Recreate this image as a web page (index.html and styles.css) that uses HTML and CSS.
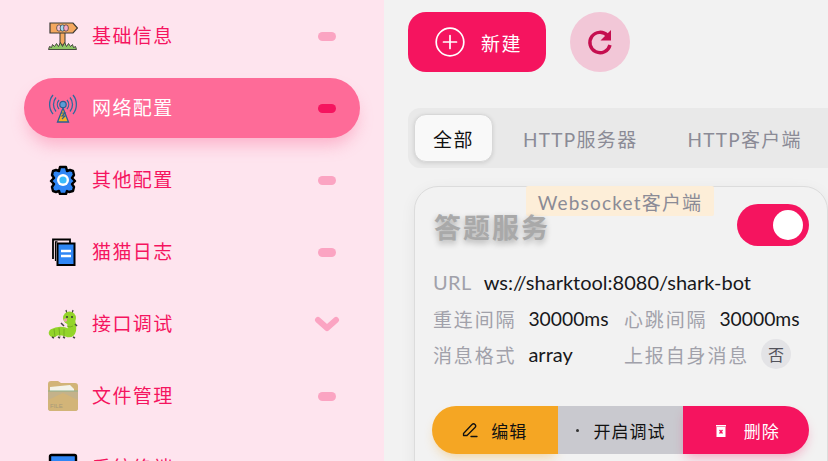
FILE: index.html
```html
<!DOCTYPE html>
<html lang="zh">
<head>
<meta charset="utf-8">
<title>网络配置</title>
<link rel="stylesheet" href="styles.css">
</head>
<body>
<div class="app">
  <aside class="sidebar">
    <div class="nav-item">
      <svg class="nav-icon" viewBox="0 0 30 30"><path d="M12 11h5v13h-5z" fill="#f4a85f" stroke="#3b3a36" stroke-width="1"/><path d="M2 2h23l4.500 5-4.500 5H2z" fill="#f4a85f" stroke="#3b3a36" stroke-width="1.200"/><ellipse cx="11" cy="7" rx="2.400" ry="3.200" fill="#f7c6d0" stroke="#333" stroke-width=".7"/><ellipse cx="14.500" cy="7" rx="2.400" ry="3.200" fill="#a5d8ef" stroke="#333" stroke-width=".7"/><ellipse cx="18" cy="7" rx="2.400" ry="3.200" fill="#f4a9c6" stroke="#333" stroke-width=".7"/><path d="M.5 28.500l1-3 2 1 1-3 2 2 2-3 2 3 2-4 2 4 2-4 2 4 2-3 2 3 2-2 1 3 2-1 1 3z" fill="#8fc766" stroke="#3b3a36" stroke-width=".9"/></svg>
      <span class="nav-label">基础信息</span><span class="nav-pill"></span>
    </div>
    <div class="nav-item is-active">
      <svg class="nav-icon" viewBox="0 0 30 30" fill="none"><path d="M8 4.500a11 11 0 0 0 0 14M22 4.500a11 11 0 0 1 0 14" stroke="#2f6a9e" stroke-width="1.300"/><path d="M5 2a15 15 0 0 0 0 19M25 2a15 15 0 0 1 0 19" stroke="#2f6a9e" stroke-width="1.300"/><path d="M11 7a7 7 0 0 0 0 9M19 7a7 7 0 0 1 0 9" stroke="#2f6a9e" stroke-width="1.300"/><path d="M15 15l5.500 14H9.500z" fill="#f5b120" stroke="#2b5f92" stroke-width="1.300"/><path d="M13 20h4l-3 3h3l-3 3" stroke="#2b5f92" stroke-width="1.100"/><circle cx="15" cy="11.500" r="3.200" fill="#5b9bd5" stroke="#2b5f92" stroke-width="1.200"/></svg>
      <span class="nav-label">网络配置</span><span class="nav-pill"></span>
    </div>
    <div class="nav-item">
      <svg class="nav-icon" viewBox="0 0 30 30"><path d="M12 2h6l1 4 3-1 3 1 1 4-2 3 3 3-3 3 2 3-1 4-4 1-2-1-1 3h-6l-1-3-3 1-3-1-1-4 2-3-3-3 3-3-2-3 1-4 3-1 3 1z" fill="#2f86f5" stroke="#000" stroke-width="2.400" stroke-linejoin="round"/><circle cx="15" cy="15" r="6" fill="#fff"/><circle cx="15" cy="15" r="3.600" fill="#3cbcfa"/></svg>
      <span class="nav-label">其他配置</span><span class="nav-pill"></span>
    </div>
    <div class="nav-item">
      <svg class="nav-icon" viewBox="0 0 30 30"><path d="M5 22V2.500h17v4" fill="none" stroke="#000" stroke-width="1.800"/><path d="M7.500 24V4.800h2" fill="none" stroke="#000" stroke-width="1.200"/><rect x="9.500" y="6.500" width="17" height="21.500" fill="#2f86f5" stroke="#000" stroke-width="2"/><path d="M13 14h10M13 19h10" stroke="#fff" stroke-width="2.400"/></svg>
      <span class="nav-label">猫猫日志</span><span class="nav-pill"></span>
    </div>
    <div class="nav-item">
      <svg class="nav-icon" viewBox="0 0 30 30"><path d="M18 1l1 4M25 1l-1 4" stroke="#444" stroke-width="1.200"/><path d="M5 24Q12 20 20 24Q26 25 23 12" fill="none" stroke="#93d42a" stroke-width="8.500" stroke-linecap="round"/><circle cx="21.500" cy="9" r="6.500" fill="#93d42a"/><circle cx="19" cy="8" r="1" fill="#333"/><circle cx="24" cy="8" r="1" fill="#333"/><circle cx="17.500" cy="11" r="1.700" fill="#e8a3a0"/><path d="M6 20l1 8M11 19l1 9M16 20l0 8M19 17q3 2 6 0" fill="none" stroke="#6fa51f" stroke-width=".8"/><path d="M13 14l3 3M27 15l2 2M4 28l2 1M10 28l2 1M15 28l2 1M25 28l2 1" stroke="#444" stroke-width="1.500"/></svg>
      <span class="nav-label">接口调试</span>
      <svg class="nav-chevron" viewBox="0 0 26 16"><path d="M4 4l9 8 9-8" fill="none" stroke="#fba4c2" stroke-width="6" stroke-linecap="round" stroke-linejoin="round"/></svg>
    </div>
    <div class="nav-item">
      <svg class="nav-icon" viewBox="0 0 30 30"><path d="M0 3a3 3 0 0 1 3-3h7l3 2h14a3 3 0 0 1 3 3v9H0z" fill="#d2b478"/><path d="M2 6l20-2 4 4v7H2z" fill="#f3f3ea"/><path d="M0 10h30v17a3 3 0 0 1-3 3H3a3 3 0 0 1-3-3z" fill="#c4b28a"/><path d="M0 19l15-7 15 7v8a3 3 0 0 1-3 3H3a3 3 0 0 1-3-3z" fill="#d2b478"/><path d="M0 10h30" stroke="#8fb08c"/><text x="2" y="27" class="folder-text">FILE</text></svg>
      <span class="nav-label">文件管理</span><span class="nav-pill"></span>
    </div>
    <div class="nav-item">
      <svg class="nav-icon" viewBox="0 0 30 30"><rect x="2" y="2" width="26" height="20" rx="1.500" fill="#2f86f5" stroke="#000" stroke-width="2.400"/></svg>
      <span class="nav-label">系统终端</span><span class="nav-pill"></span>
    </div>
  </aside>

  <main class="main">
    <div class="toolbar">
      <button class="btn-new">
        <svg class="btn-new-icon" viewBox="0 0 30 30" fill="none" stroke="#fff" stroke-width="1.700"><circle cx="15" cy="15" r="13.800"/><path d="M15 8.500v13M8.500 15h13" stroke-linecap="round"/></svg>
        <span>新建</span>
      </button>
      <button class="btn-refresh">
        <svg viewBox="0 0 28 28" class="btn-refresh-icon"><path d="M21.500 7.500A10.200 10.200 0 1 0 24 17" fill="none" stroke="#c50f4f" stroke-width="3.400"/><path d="M25 2v10.500H14.500z" fill="#c50f4f"/></svg>
      </button>
    </div>

    <div class="tabs">
      <div class="tab is-current">全部</div>
      <div class="tab">HTTP服务器</div>
      <div class="tab">HTTP客户端</div>
    </div>

    <section class="card">
      <span class="floating-tag">Websocket客户端</span>
      <div class="card-head">
        <h2 class="card-title">答题服务</h2>
        <div class="toggle"><span class="knob"></span></div>
      </div>
      <div class="meta">
        <div class="row"><span class="key key-url">URL</span><span class="val">ws://sharktool:8080/shark-bot</span></div>
        <div class="row pairs">
          <div class="pair"><span class="key">重连间隔</span><span class="val val-num">30000ms</span></div>
          <div class="pair"><span class="key">心跳间隔</span><span class="val val-num">30000ms</span></div>
        </div>
        <div class="row pairs">
          <div class="pair"><span class="key">消息格式</span><span class="val">array</span></div>
          <div class="pair"><span class="key">上报自身消息</span><span class="chip">否</span></div>
        </div>
      </div>
      <div class="actions">
        <button class="act act-edit">
          <svg class="act-icon" viewBox="0 0 16 16" fill="none" stroke="#111" stroke-width="1.300"><path d="M1.500 11.500L10 2.500a1.800 1.800 0 0 1 3 3L5 13.500H1.500z" stroke-linejoin="round"/><path d="M9 14.500h6" stroke-linecap="round"/></svg>
          <span>编辑</span>
        </button>
        <button class="act act-debug"><span class="dot"></span><span>开启调试</span></button>
        <button class="act act-del">
          <svg class="act-icon" viewBox="0 0 16 16"><path d="M3 3h10v1.500H3zM3.500 5h9v10h-9z" fill="#fff"/><path d="M6.500 8l3 3.500M9.500 8l-3 3.500" stroke="#f5145f" stroke-width="1.300"/></svg>
          <span>删除</span>
        </button>
      </div>
    </section>
  </main>
</div>
</body>
</html>
```

FILE: styles.css
```css
* { box-sizing: border-box; }
html, body { margin: 0; height: 100%; overflow: hidden; }
body {
  background: #f2f2f2;
  font-family: "Lato", "Noto Sans CJK SC", sans-serif;
  color: #18181b;
}
button { font: inherit; border: 0; padding: 0; }
.app { display: flex; height: 461px; overflow: hidden; }

.sidebar {
  width: 384px;
  flex: none;
  height: 461px;
  overflow: hidden;
  background: #fee4ee;
  padding: 6px 24px 0;
  display: flex;
  flex-direction: column;
  gap: 12px;
}
.nav-item {
  flex: none;
  height: 60px;
  border-radius: 30px;
  display: flex;
  align-items: center;
  padding: 0 24px;
  color: #f5145f;
}
.nav-item.is-active {
  background: #fe6b98;
  color: #fff;
  box-shadow: 0 10px 16px -3px rgba(250, 105, 150, .4);
}
.nav-icon { width: 30px; height: 30px; flex: none; }
.nav-label { margin-left: 14px; font-size: 19px; letter-spacing: 1.400px; line-height: 24px; }
.nav-pill {
  margin-left: auto;
  width: 18px;
  height: 9px;
  border-radius: 5px;
  background: #fba4c2;
}
.is-active .nav-pill { background: #f5145f; }
.nav-chevron { margin-left: auto; margin-right: -4px; width: 26px; height: 16px; }
.folder-text { font: 6px "Liberation Sans", sans-serif; fill: #a89a78; }

.main { flex: 1; min-width: 0; padding: 12px 0 0 24px; overflow: hidden; }
.toolbar { display: flex; gap: 24px; }
.btn-new {
  width: 138px;
  height: 60px;
  border-radius: 18px;
  background: #f5145f;
  color: #fff;
  display: flex;
  align-items: center;
  justify-content: center;
  gap: 16px;
  padding-left: 3px;
  font-size: 19px;
  letter-spacing: 1.500px;
}
.btn-new-icon { width: 30px; height: 30px; }
.btn-refresh {
  width: 60px;
  height: 60px;
  border-radius: 50%;
  background: #f2c7d7;
  display: flex;
  align-items: center;
  justify-content: center;
}
.btn-refresh-icon { width: 28px; height: 28px; }

.tabs {
  margin-top: 36px;
  height: 60px;
  width: 440px;
  background: #e9e9e9;
  border-radius: 12px 0 0 12px;
  padding: 6px;
  display: flex;
  white-space: nowrap;
}
.tab {
  height: 48px;
  padding: 0 25px;
  display: flex;
  align-items: center;
  color: #8b8b96;
  font-size: 19px;
  letter-spacing: 1.300px;
}
.tab.is-current {
  width: 79px;
  padding: 0;
  justify-content: center;
  background: #f9f9f9;
  color: #111;
  border: 1px solid #d8d8d8;
  border-radius: 12px;
  box-shadow: 0 1px 4px rgba(0, 0, 0, .12);
  letter-spacing: 1.500px;
  margin-right: 5px;
}

.card {
  position: relative;
  margin: 18px 0 0 6px;
  width: 414px;
  height: 320px;
  border: 1px solid #dcdcdc;
  border-radius: 24px;
  background: #f2f2f2;
  box-shadow: 0 4px 16px rgba(0, 0, 0, .06);
  padding: 17px 17px 0;
}
.floating-tag {
  position: absolute;
  left: 111px;
  top: -1px;
  height: 30px;
  width: 188px;
  background: #fdeed8;
  color: #8b8b96;
  font-size: 19px;
  letter-spacing: 1.200px;
  display: flex;
  align-items: center;
  justify-content: center;
  border-radius: 2px;
}
.card-head { display: flex; align-items: center; justify-content: space-between; height: 42px; width: 377px; }
.card-title {
  margin: 0 0 0 2px;
  font-size: 27px;
  font-weight: 700;
  letter-spacing: 2px;
  color: #a9a9a9;
  text-shadow: 0 3px 6px rgba(0, 0, 0, .3);
  line-height: 36px;
  position: relative;
  top: 3px;
}
.toggle {
  width: 72px;
  height: 42px;
  border-radius: 21px;
  background: #f5145f;
  display: flex;
  align-items: center;
  justify-content: flex-end;
  padding-right: 6px;
}
.knob { width: 30px; height: 30px; border-radius: 50%; background: #fff; }

.meta { margin-top: 24px; display: flex; flex-direction: column; gap: 12px; padding-left: 1px; }
.row { display: flex; align-items: center; height: 24px; white-space: nowrap; font-size: 19px; }
.pairs { display: grid; grid-template-columns: 191px auto; }
.pair { display: flex; align-items: center; gap: 12px; height: 24px; }
.key { color: #a1a1aa; letter-spacing: 1.850px; }
.key-url { margin-right: 12px; font-size: 20px; letter-spacing: .4px; }
.val { color: #18181b; font-size: 20px; }
.val-num { font-size: 19.300px; }
.chip {
  width: 30px;
  height: 30px;
  flex: none;
  border-radius: 50%;
  background: #e3e3e6;
  color: #52525b;
  font-size: 16px;
  display: flex;
  align-items: center;
  justify-content: center;
}

.actions {
  margin-top: 40px;
  width: 377px;
  height: 48px;
  display: flex;
}
.act {
  flex: 1;
  display: flex;
  align-items: center;
  justify-content: center;
  font-size: 17px;
  letter-spacing: 1px;
  color: #111;
}
.act-icon { width: 16px; height: 16px; }
.act-edit {
  background: #f5a623;
  border-radius: 24px 0 0 24px;
  gap: 13px;
  box-shadow: 0 6px 12px -4px rgba(245, 166, 35, .45);
}
.act-debug { background: #c9c9cf; gap: 15px; }
.dot { width: 3px; height: 3px; border-radius: 50%; background: #333; }
.act-del {
  background: #f5145f;
  color: #fff;
  border-radius: 0 24px 24px 0;
  gap: 15px;
  box-shadow: 0 6px 12px -3px rgba(245, 20, 95, .35);
}
```
